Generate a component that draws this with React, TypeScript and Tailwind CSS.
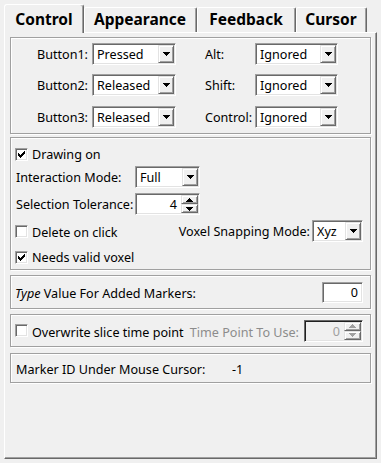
import React from "react";

const sunken =
  "border border-t-[#a0a0a0] border-l-[#a0a0a0] border-r-white border-b-white shadow-[inset_1px_1px_0_#696969,inset_-1px_-1px_0_#e3e3e3]";
const sunkenDis =
  "border border-t-[#696969] border-l-[#696969] border-r-white border-b-white shadow-[inset_1px_1px_0_#202020,inset_-1px_-1px_0_#e3e3e3]";
const raised =
  "border border-t-[#e3e3e3] border-l-[#e3e3e3] border-r-[#696969] border-b-[#696969] shadow-[inset_1px_1px_0_#ffffff,inset_-1px_-1px_0_#a0a0a0]";

function TriDown({ c = "#000" }: { c?: string }) {
  return (
    <svg width="7" height="4" viewBox="0 0 7 4" shapeRendering="crispEdges">
      <rect x="0" y="0" width="7" height="1" fill={c} />
      <rect x="1" y="1" width="5" height="1" fill={c} />
      <rect x="2" y="2" width="3" height="1" fill={c} />
      <rect x="3" y="3" width="1" height="1" fill={c} />
    </svg>
  );
}

function TriUp({ c = "#000" }: { c?: string }) {
  return (
    <svg width="7" height="4" viewBox="0 0 7 4" shapeRendering="crispEdges">
      <rect x="3" y="0" width="1" height="1" fill={c} />
      <rect x="2" y="1" width="3" height="1" fill={c} />
      <rect x="1" y="2" width="5" height="1" fill={c} />
      <rect x="0" y="3" width="7" height="1" fill={c} />
    </svg>
  );
}

function Combo({ w, text }: { w: string; text: string }) {
  return (
    <div className={`${w} h-[22px] bg-white ${sunken} flex items-center pl-[4px] pr-[1px]`}>
      <span className="flex-1 leading-[17px] whitespace-nowrap">{text}</span>
      <div className={`w-[16px] h-[18px] bg-[#f0f0f0] ${raised} flex items-center justify-center`}>
        <TriDown />
      </div>
    </div>
  );
}

function Spin({ w, val, disabled }: { w: string; val: string; disabled?: boolean }) {
  const c = disabled ? "#a0a0a0" : "#000";
  return (
    <div
      className={`${w} h-[22px] ${disabled ? "bg-[#f0f0f0] " + sunkenDis : "bg-white " + sunken} flex items-start pt-[1px] pr-[1px]`}
    >
      <span className={`flex-1 text-right pr-[4px] self-center leading-[17px] ${disabled ? "text-[#a0a0a0]" : ""}`}>
        {val}
      </span>
      <div className="flex flex-col w-[17px]">
        <div className={`h-[9px] bg-[#f0f0f0] ${raised} flex items-center justify-center`}>
          <TriUp c={c} />
        </div>
        <div className={`h-[9px] bg-[#f0f0f0] ${raised} flex items-center justify-center`}>
          <TriDown c={c} />
        </div>
      </div>
    </div>
  );
}

function Check({ on }: { on?: boolean }) {
  const rows: [number, number, number][] = [
    [6, 0, 1],
    [5, 1, 2],
    [0, 2, 1],
    [4, 2, 3],
    [0, 3, 2],
    [3, 3, 3],
    [0, 4, 5],
    [1, 5, 3],
    [2, 6, 1],
  ];
  return (
    <div className={`w-[13px] h-[13px] shrink-0 bg-white ${sunken} flex items-center justify-center`}>
      {on && (
        <svg width="7" height="7" viewBox="0 0 7 7" shapeRendering="crispEdges">
          {rows.map(([x, y, wd], i) => (
            <rect key={i} x={x} y={y} width={wd} height="1" fill="#000" />
          ))}
        </svg>
      )}
    </div>
  );
}

const group = "border border-[#a0a0a0] shadow-[1px_1px_0_#ffffff,inset_1px_1px_0_#ffffff]";

const tabSel =
  "relative h-[29px] bg-[#f0f0f0] border-t border-l border-r border-t-white border-l-white border-r-[#696969] rounded-t-[3px] shadow-[inset_-1px_0_0_#a0a0a0] flex justify-center pt-[4px]";
const tabUn =
  "h-[25px] mt-[3px] bg-[#f0f0f0] border-t border-r border-t-white border-r-[#696969] rounded-t-[2px] shadow-[inset_-1px_0_0_#a0a0a0,inset_1px_0_0_#ffffff] flex justify-center pt-[1px]";

export default function App() {
  return (
    <div className="w-[381px] h-[463px] bg-[#f0f0f0] font-['Noto_Sans',sans-serif] text-[12.6px] text-black pt-[4px] pl-[4px] overflow-hidden">
      {/* tabs */}
      <div className="relative z-10 flex items-start h-[28px] text-[15.5px] font-bold leading-[20px]">
        <div className={`${tabSel} w-[80px]`}>Control</div>
        <div className={`${tabUn} w-[113px]`}>Appearance</div>
        <div className={`${tabUn} w-[99px]`}>Feedback</div>
        <div className={`${tabUn} w-[71px]`}>Cursor</div>
      </div>

      {/* pane */}
      <div className="w-[373px] h-[427px] border border-t-white border-l-white border-r-[#696969] border-b-[#696969] shadow-[inset_-1px_-1px_0_#a0a0a0] pt-[4px] pl-[5px] flex flex-col">
        {/* group 1 */}
        <div className={`${group} w-[361px] h-[97px] pt-[5px] flex flex-col`}>
          {[
            ["Button1:", "Pressed", "Alt:", "Ignored"],
            ["Button2:", "Released", "Shift:", "Ignored"],
            ["Button3:", "Released", "Control:", "Ignored"],
          ].map(([l1, v1, l2, v2], i) => (
            <div key={i} className={`flex items-center h-[22px] ${i === 1 ? "mt-[9px]" : i === 2 ? "mt-[10px]" : ""}`}>
              <span className="w-[77px] text-right leading-[17px]">{l1}</span>
              <div className="ml-[4px]">
                <Combo w="w-[84px]" text={v1} />
              </div>
              <span className="ml-[29px] w-[50px] leading-[17px]">{l2}</span>
              <Combo w="w-[83px]" text={v2} />
            </div>
          ))}
        </div>

        {/* group 2 */}
        <div className={`${group} w-[361px] h-[133px] mt-[3px] flex flex-col pt-[6px]`}>
          <div className="flex items-center h-[20px] pl-[4px]">
            <Check on />
            <span className="ml-[4px] leading-[17px]">Drawing on</span>
          </div>
          <div className="flex items-center h-[22px] mt-[2px] pl-[5px]">
            <span className="w-[119px] leading-[17px]">Interaction Mode:</span>
            <Combo w="w-[65px]" text="Full" />
          </div>
          <div className="flex items-center h-[22px] mt-[5px] pl-[5px]">
            <span className="w-[119px] leading-[17px]">Selection Tolerance:</span>
            <Spin w="w-[65px]" val="4" />
          </div>
          <div className="flex items-center h-[22px] mt-[5px] pl-[4px] pr-[7px]">
            <Check />
            <span className="ml-[4px] leading-[17px] mt-[3px]">Delete on click</span>
            <span className="ml-auto leading-[17px] mr-[2px]">Voxel Snapping Mode:</span>
            <Combo w="w-[51px]" text="Xyz" />
          </div>
          <div className="flex items-center h-[20px] mt-[5px] pl-[4px]">
            <Check on />
            <span className="ml-[4px] leading-[17px]">Needs valid voxel</span>
          </div>
        </div>

        {/* group 3 */}
        <div className={`${group} w-[361px] h-[34px] mt-[5px] flex items-center pl-[4px] pr-[7px]`}>
          <span className="leading-[17px] mt-[2px]">
            <i>Type</i> Value For Added Markers:
          </span>
          <div className={`ml-auto w-[41px] h-[21px] bg-white ${sunken} flex items-center justify-end pr-[4px]`}>
            <span className="leading-[17px]">0</span>
          </div>
        </div>

        {/* group 4 */}
        <div className={`${group} w-[361px] h-[33px] mt-[5px] flex items-center pl-[4px] pr-[7px]`}>
          <Check />
          <span className="ml-[4px] leading-[17px] mt-[3px]">Overwrite slice time point</span>
          <span className="ml-auto leading-[17px] mt-[3px] mr-[5px] text-[#8c8c8c]">Time Point To Use:</span>
          <Spin w="w-[59px]" val="0" disabled />
        </div>

        {/* group 5 */}
        <div className={`${group} w-[361px] h-[30px] mt-[6px] flex items-center pl-[5px] pt-[3px]`}>
          <span className="w-[216px] leading-[17px]">Marker ID Under Mouse Cursor:</span>
          <span className="leading-[17px]">-1</span>
        </div>
      </div>
    </div>
  );
}
